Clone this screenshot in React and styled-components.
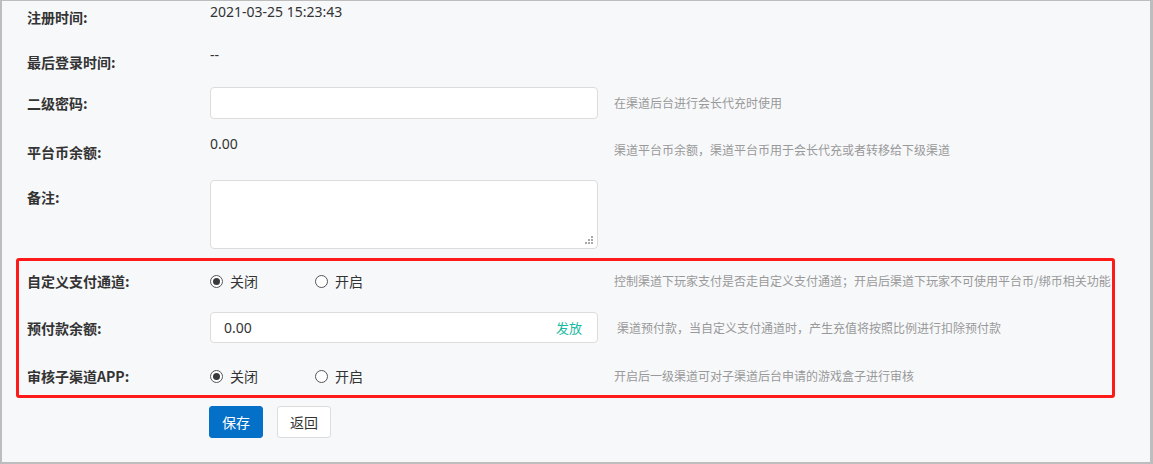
import React from 'react';
import styled, { createGlobalStyle } from 'styled-components';

const Global = createGlobalStyle`
  html, body {
    margin: 0;
    padding: 0;
    background: #ffffff;
  }
  body {
    font-family: "Noto Sans", "Noto Sans CJK SC", sans-serif;
    color: #333;
  }
`;

const Frame = styled.div`
  box-sizing: border-box;
  width: 1153px;
  height: 464px;
  background: #f7f8fa;
  border-style: solid;
  border-color: #bdbdbd;
  border-width: 1px 3px 2px 2px;
  overflow: hidden;
`;

const Row = styled.div`
  display: grid;
  grid-template-columns: ${p => (p.$inner ? 191 : 208)}px 388px 1fr;
  align-items: start;
  margin-bottom: ${p => p.$mb || 0}px;
`;

const Label = styled.div`
  padding-left: ${p => (p.$inner ? 8 : 25)}px;
  padding-top: ${p => p.$pt || 0}px;
  font-family: "Noto Sans CJK SC", sans-serif;
  font-size: 14px;
  font-weight: bold;
  line-height: 32px;
  color: #333;
  white-space: nowrap;
`;

const Value = styled.div`
  font-size: 14px;
  line-height: 20px;
  margin-top: ${p => p.$mt ?? 1}px;
  color: #333;
`;

const Hint = styled.div`
  font-family: "Noto Sans CJK SC", sans-serif;
  font-size: 12px;
  line-height: ${p => p.$lh || 32}px;
  color: #999;
  white-space: nowrap;
  padding-left: ${p => 16 + (p.$pl || 0)}px;
`;

const InputBox = styled.div`
  position: relative;
  box-sizing: border-box;
  height: ${p => p.$h || 32}px;
  background: #fff;
  border: 1px solid #dcdcdc;
  border-radius: 4px;
  display: flex;
  align-items: center;
`;

const Field = styled.input`
  flex: 1;
  height: 100%;
  border: none;
  outline: none;
  background: transparent;
  padding: 0 0 0 13px;
  font-family: inherit;
  font-size: 14px;
  color: #333;
`;

const Area = styled.textarea`
  box-sizing: border-box;
  width: 100%;
  height: 100%;
  border: none;
  outline: none;
  resize: none;
  background: transparent;
  padding: 6px 13px;
  font-family: inherit;
  font-size: 14px;
`;

const Grip = styled.svg`
  position: absolute;
  right: 4px;
  bottom: 4px;
`;

const Issue = styled.span`
  font-family: "Noto Sans CJK SC", sans-serif;
  font-size: 13px;
  color: #17b9a0;
  margin-right: 15px;
  cursor: pointer;
`;

const Highlight = styled.div`
  margin: 0 35px 0 14px;
  border: 3px solid #ff1a1a;
  border-radius: 3px;
  padding: 4px 0 3px;
`;

const Radios = styled.div`
  display: flex;
  align-items: center;
  height: 32px;
`;

const Option = styled.label`
  width: 105px;
  display: inline-flex;
  align-items: center;
  gap: 7px;
  font-family: "Noto Sans CJK SC", sans-serif;
  font-size: 14px;
  color: #333;
`;

const Dot = styled.span`
  box-sizing: border-box;
  width: 13px;
  height: 13px;
  border-radius: 50%;
  border: 1px solid #555;
  background: #fff;
  display: inline-flex;
  align-items: center;
  justify-content: center;

  &::after {
    content: '';
    width: 7px;
    height: 7px;
    border-radius: 50%;
    background: ${p => (p.$on ? '#3a3a3a' : 'transparent')};
  }
`;

const Actions = styled.div`
  display: flex;
  gap: 14px;
  padding: 8px 0 0 207px;
`;

const Button = styled.button`
  box-sizing: border-box;
  height: 32px;
  width: 54px;
  border-radius: 3px;
  font-family: "Noto Sans CJK SC", sans-serif;
  font-size: 14px;
  cursor: pointer;
  background: ${p => (p.$primary ? '#0570c8' : '#fff')};
  color: ${p => (p.$primary ? '#fff' : '#333')};
  border: 1px solid ${p => (p.$primary ? '#0570c8' : '#dcdcdc')};
`;

const RadioGroup = ({ value }) => (
  <Radios>
    <Option>
      <Dot $on={value === 'off'} />
      关闭
    </Option>
    <Option>
      <Dot $on={value === 'on'} />
      开启
    </Option>
  </Radios>
);

export default function App() {
  return (
    <Frame>
      <Global />
      <Row $mb={13}>
        <Label>注册时间:</Label>
        <Value>2021-03-25 15:23:43</Value>
      </Row>
      <Row $mb={9}>
        <Label>最后登录时间:</Label>
        <Value $mt={-1}>--</Value>
      </Row>
      <Row $mb={17}>
        <Label>二级密码:</Label>
        <InputBox>
          <Field type="password" />
        </InputBox>
        <Hint>在渠道后台进行会长代充时使用</Hint>
      </Row>
      <Row $mb={12}>
        <Label>平台币余额:</Label>
        <Value $mt={-2}>0.00</Value>
        <Hint $lh={28}>渠道平台币余额，渠道平台币用于会长代充或者转移给下级渠道</Hint>
      </Row>
      <Row $mb={9}>
        <Label $pt={1}>备注:</Label>
        <InputBox $h={69}>
          <Area />
          <Grip width="8" height="8" viewBox="0 0 8 8">
            <rect x="6" y="0" width="2" height="2" fill="#a8a8a8" />
            <rect x="3" y="3" width="2" height="2" fill="#a8a8a8" />
            <rect x="6" y="3" width="2" height="2" fill="#a8a8a8" />
            <rect x="0" y="6" width="2" height="2" fill="#a8a8a8" />
            <rect x="3" y="6" width="2" height="2" fill="#a8a8a8" />
            <rect x="6" y="6" width="2" height="2" fill="#a8a8a8" />
          </Grip>
        </InputBox>
      </Row>

      <Highlight>
        <Row $inner $mb={15}>
          <Label $inner>自定义支付通道:</Label>
          <RadioGroup value="off" />
          <Hint>控制渠道下玩家支付是否走自定义支付通道；开启后渠道下玩家不可使用平台币/绑币相关功能</Hint>
        </Row>
        <Row $inner $mb={16}>
          <Label $inner>预付款余额:</Label>
          <InputBox $h={31}>
            <Field defaultValue="0.00" />
            <Issue>发放</Issue>
          </InputBox>
          <Hint $pl={3}>渠道预付款，当自定义支付通道时，产生充值将按照比例进行扣除预付款</Hint>
        </Row>
        <Row $inner>
          <Label $inner>审核子渠道APP:</Label>
          <RadioGroup value="off" />
          <Hint>开启后一级渠道可对子渠道后台申请的游戏盒子进行审核</Hint>
        </Row>
      </Highlight>

      <Actions>
        <Button $primary>保存</Button>
        <Button>返回</Button>
      </Actions>
    </Frame>
  );
}
